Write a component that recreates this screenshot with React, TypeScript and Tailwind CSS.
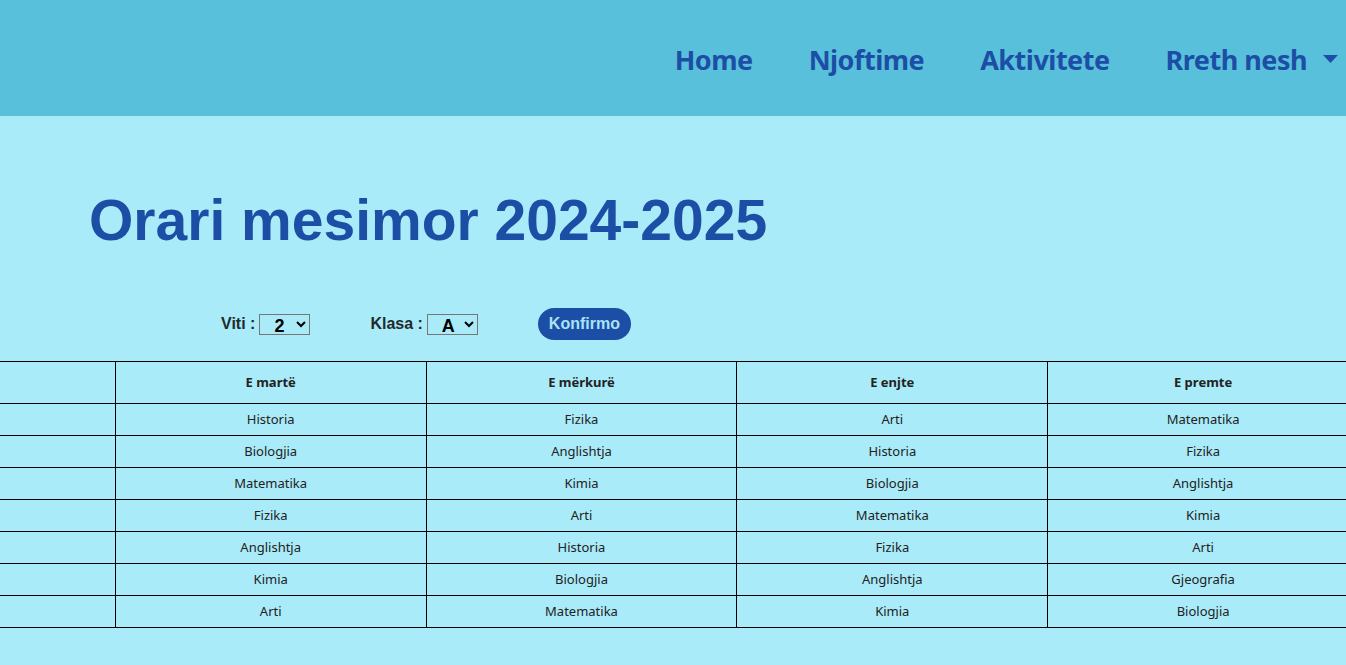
import React from 'react'

const days = ['', 'E martë', 'E mërkurë', 'E enjte', 'E premte']

// first column sits off the left edge of the page, so it stays empty
const schedule = [
  ['', 'Historia', 'Fizika', 'Arti', 'Matematika'],
  ['', 'Biologjia', 'Anglishtja', 'Historia', 'Fizika'],
  ['', 'Matematika', 'Kimia', 'Biologjia', 'Anglishtja'],
  ['', 'Fizika', 'Arti', 'Matematika', 'Kimia'],
  ['', 'Anglishtja', 'Historia', 'Fizika', 'Arti'],
  ['', 'Kimia', 'Biologjia', 'Anglishtja', 'Gjeografia'],
  ['', 'Arti', 'Matematika', 'Kimia', 'Biologjia'],
]

const App: React.FC = () => {
  return (
    <div className="min-h-[665px] bg-[#aaebf9] overflow-hidden">
      <header className="h-[116px] bg-[#59c0db] flex items-center justify-end pr-[8px] pt-[5px]">
        <nav
          className="flex items-center gap-[56px] text-[27px] font-bold text-[#1d4ea6]"
          style={{ fontFamily: '"Noto Sans", "Open Sans", sans-serif' }}
        >
          <a className="tracking-[-0.5px] ml-[-4px]">Home</a>
          <a className="tracking-[-0.5px]">Njoftime</a>
          <a className="tracking-[-0.5px]">Aktivitete</a>
          <a className="flex items-center gap-[16px] tracking-[-0.5px]">
            Rreth nesh
            <svg width="15" height="8" viewBox="0 0 15 8" className="mb-[4px]">
              <path d="M0 0 H15 L7.5 8 Z" fill="#1d4ea6" />
            </svg>
          </a>
        </nav>
      </header>

      <main style={{ fontFamily: '"Liberation Sans", Arial, sans-serif' }}>
        <h1 className="pl-[89px] pt-[67px] text-[57px] leading-[74px] font-bold text-[#1d4ea6]">
          Orari mesimor 2024-2025
        </h1>

        <div className="mt-[51px] pl-[221px] flex items-center text-[16px] font-bold text-[#1f2a2e]">
          <label className="flex items-center">
            Viti :
            <select className="ml-[4px] w-[51px] h-[21px] border border-[#767676] bg-transparent text-[18px] text-black pl-[10px]">
              <option>2</option>
            </select>
          </label>
          <label className="flex items-center ml-[60px]">
            Klasa :
            <select className="ml-[4px] w-[51px] h-[21px] border border-[#767676] bg-transparent text-[18px] text-black pl-[10px]">
              <option>A</option>
            </select>
          </label>
          <button className="ml-[60px] h-[32px] px-[11px] rounded-full bg-[#1d4ea6] text-[#a9e3f7] text-[16px] font-bold">
            Konfirmo
          </button>
        </div>

        <table
          className="mt-[21px] ml-[-196px] w-[1555px] border-collapse table-fixed text-[13px] text-[#222]"
          style={{ fontFamily: '"Noto Sans", "Open Sans", sans-serif' }}
        >
          <thead>
            <tr className="h-[42px]">
              {days.map((d, i) => (
                <th key={i} className="border border-black font-bold">
                  {d}
                </th>
              ))}
            </tr>
          </thead>
          <tbody>
            {schedule.map((row, i) => (
              <tr key={i} className="h-[32px]">
                {row.map((s, j) => (
                  <td key={j} className="border border-black text-center">
                    {s}
                  </td>
                ))}
              </tr>
            ))}
          </tbody>
        </table>
      </main>
    </div>
  )
}

export default App
